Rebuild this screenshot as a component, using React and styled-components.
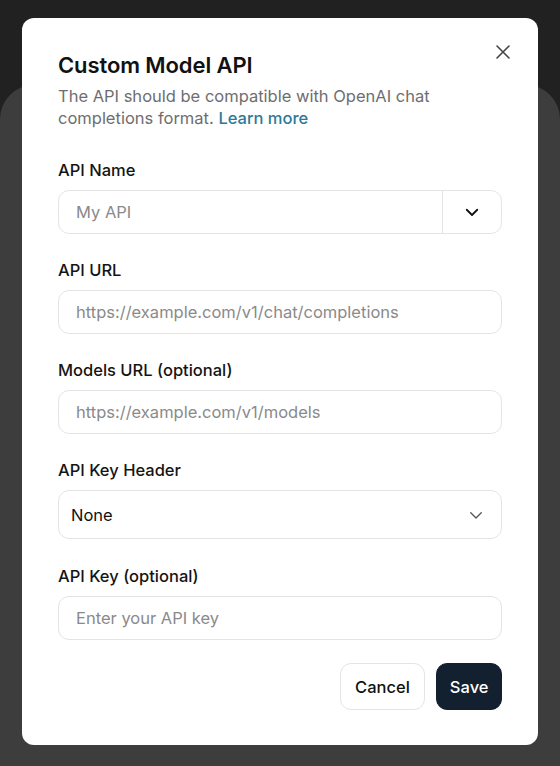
import React from "react";
import styled, { createGlobalStyle } from "styled-components";

const Global = createGlobalStyle`
  html, body {
    margin: 0;
    padding: 0;
    background: #212121;
    font-family: Inter, "Noto Sans", "Liberation Sans", sans-serif;
  }
`;

const Screen = styled.div`
  position: relative;
  width: 560px;
  height: 766px;
  overflow: hidden;
  background: #212121;
`;

// the app page behind the dimmed overlay
const BackPanel = styled.div`
  position: absolute;
  left: 0;
  right: 0;
  top: 85px;
  bottom: -40px;
  background: #3d3d3d;
  border-radius: 34px 34px 0 0;
`;

const Overlay = styled.div`
  position: absolute;
  inset: 0;
  display: flex;
  justify-content: center;
  padding-top: 18px;
`;

const Dialog = styled.div`
  position: relative;
  width: 516px;
  box-sizing: border-box;
  background: #fff;
  border-radius: 12px;
  padding: 32px 36px 35px 36px;
  height: 727px;
`;

const CloseBtn = styled.button`
  position: absolute;
  top: 25px;
  right: 26px;
  width: 18px;
  height: 18px;
  padding: 0;
  border: none;
  background: none;
  color: #444;
  display: flex;
  align-items: center;
  justify-content: center;
`;

const Title = styled.h2`
  margin: 0;
  font-size: 22px;
  line-height: 30px;
  font-weight: 600;
  color: #111;
  letter-spacing: -0.1px;
`;

const Subtitle = styled.div`
  margin: 5px 0 0;
  font-size: 16.5px;
  line-height: 22px;
  color: #6e6e6e;
  width: 400px;
`;

const Link = styled.span`
  color: #2b7a98;
  font-weight: 500;
`;

const Form = styled.div`
  display: flex;
  flex-direction: column;
  margin-top: 30px;
`;

const Field = styled.div`
  display: flex;
  flex-direction: column;
  gap: 9px;
  margin-bottom: ${(p) => p.$after}px;
`;

const Label = styled.label`
  font-size: 16.5px;
  line-height: 22px;
  font-weight: 500;
  color: #141414;
`;

const Box = styled.div`
  display: flex;
  align-items: center;
  height: ${(p) => p.$h || 44}px;
  box-sizing: border-box;
  border: 1px solid #e4e4e4;
  border-radius: 11px;
  background: #fff;
  overflow: hidden;
`;

const Input = styled.input`
  flex: 1;
  min-width: 0;
  height: 100%;
  border: none;
  outline: none;
  background: transparent;
  padding: 0 17px;
  font-family: inherit;
  font-size: 16.5px;
  color: #111;
  &::placeholder {
    color: #8a8a8a;
  }
`;

const AddonBtn = styled.div`
  width: 58px;
  height: 100%;
  border-left: 1px solid #e4e4e4;
  display: flex;
  align-items: center;
  justify-content: center;
  color: #111;
`;

const SelectValue = styled.div`
  flex: 1;
  padding-left: 12px;
  font-size: 16.5px;
  color: #111;
`;

const SelectIcon = styled.div`
  width: 50px;
  display: flex;
  align-items: center;
  justify-content: center;
  color: #555;
`;

const Actions = styled.div`
  display: flex;
  justify-content: flex-end;
  gap: 11px;
`;

const Button = styled.button`
  height: 47px;
  padding: 0 ${(p) => (p.$primary ? 12.5 : 14.5)}px;
  border-radius: 11px;
  font-family: inherit;
  font-size: 16.5px;
  font-weight: 500;
  border: 1px solid ${(p) => (p.$primary ? "#13202f" : "#e4e4e4")};
  background: ${(p) => (p.$primary ? "#13202f" : "#fff")};
  color: ${(p) => (p.$primary ? "#fff" : "#111")};
`;

const Chevron = ({ size = 16, stroke = 2 }) => (
  <svg width={size} height={size} viewBox="0 0 24 24" fill="none" stroke="currentColor" strokeWidth={stroke} strokeLinecap="round" strokeLinejoin="round">
    <path d="M5 9l7 7 7-7" />
  </svg>
);

export default function App() {
  return (
    <Screen>
      <Global />
      <BackPanel />
      <Overlay>
        <Dialog>
          <CloseBtn aria-label="Close">
            <svg width="16" height="16" viewBox="0 0 16 16" fill="none" stroke="currentColor" strokeWidth="1.6" strokeLinecap="round">
              <path d="M2 2l12 12M14 2L2 14" />
            </svg>
          </CloseBtn>
          <Title>Custom Model API</Title>
          <Subtitle>
            The API should be compatible with OpenAI chat completions format. <Link>Learn more</Link>
          </Subtitle>
          <Form>
            <Field $after={25}>
              <Label>API Name</Label>
              <Box>
                <Input placeholder="My API" />
                <AddonBtn>
                  <Chevron size={18} stroke={2.4} />
                </AddonBtn>
              </Box>
            </Field>
            <Field $after={25}>
              <Label>API URL</Label>
              <Box>
                <Input placeholder="https://example.com/v1/chat/completions" />
              </Box>
            </Field>
            <Field $after={25}>
              <Label>Models URL (optional)</Label>
              <Box>
                <Input placeholder="https://example.com/v1/models" />
              </Box>
            </Field>
            <Field $after={26}>
              <Label>API Key Header</Label>
              <Box $h={49}>
                <SelectValue>None</SelectValue>
                <SelectIcon>
                  <Chevron size={18} stroke={1.8} />
                </SelectIcon>
              </Box>
            </Field>
            <Field $after={23}>
              <Label>API Key (optional)</Label>
              <Box>
                <Input placeholder="Enter your API key" />
              </Box>
            </Field>
            <Actions>
              <Button>Cancel</Button>
              <Button $primary>Save</Button>
            </Actions>
          </Form>
        </Dialog>
      </Overlay>
    </Screen>
  );
}
